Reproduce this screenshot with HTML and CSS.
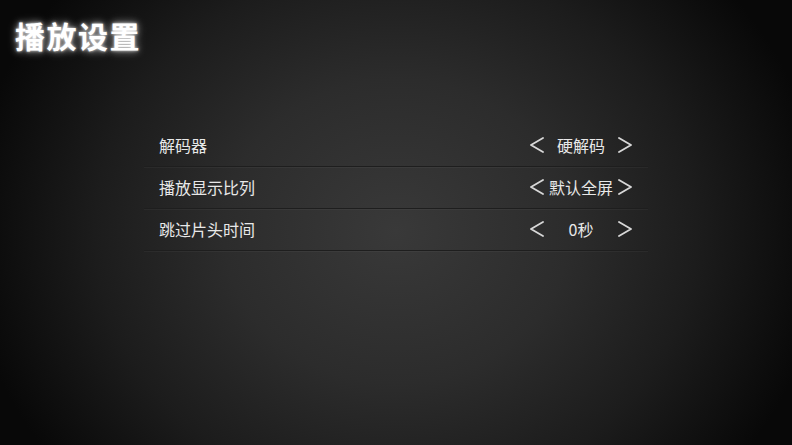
FILE: index.html
```html
<!DOCTYPE html>
<html lang="zh-CN">
<head>
<meta charset="utf-8">
<title>播放设置</title>
<link rel="stylesheet" href="styles.css">
</head>
<body>
<div class="screen">
  <h1 class="title">播放设置</h1>
  <ul class="settings">
    <li class="row">
      <span class="label">解码器</span>
      <span class="control">
        <svg class="chev" viewBox="0 0 14 16"><polyline points="13,1 1,8 13,15"/></svg>
        <span class="value">硬解码</span>
        <svg class="chev" viewBox="0 0 14 16"><polyline points="1,1 13,8 1,15"/></svg>
      </span>
    </li>
    <li class="row">
      <span class="label">播放显示比列</span>
      <span class="control">
        <svg class="chev" viewBox="0 0 14 16"><polyline points="13,1 1,8 13,15"/></svg>
        <span class="value">默认全屏</span>
        <svg class="chev" viewBox="0 0 14 16"><polyline points="1,1 13,8 1,15"/></svg>
      </span>
    </li>
    <li class="row">
      <span class="label">跳过片头时间</span>
      <span class="control">
        <svg class="chev" viewBox="0 0 14 16"><polyline points="13,1 1,8 13,15"/></svg>
        <span class="value">0秒</span>
        <svg class="chev" viewBox="0 0 14 16"><polyline points="1,1 13,8 1,15"/></svg>
      </span>
    </li>
  </ul>
</div>
</body>
</html>
```
FILE: styles.css
```css
* { box-sizing: border-box; }
html, body {
  margin: 0;
  padding: 0;
  width: 792px;
  height: 445px;
  overflow: hidden;
}
body {
  font-family: "Noto Sans CJK SC", "Noto Sans", sans-serif;
  color: #e6e6e6;
  background: #000;
}
.screen {
  width: 792px;
  height: 445px;
  background: radial-gradient(ellipse 430px 380px at 50% 52%, #393939 0%, #2c2c2c 40%, #1c1c1c 70%, #080808 100%);
  padding: 19px 0 0 0;
  display: flex;
  flex-direction: column;
}
.title {
  margin: 0 0 0 15px;
  font-size: 30px;
  line-height: 32px;
  font-weight: 700;
  color: #ffffff;
  text-shadow: 0 0 3px rgba(255,255,255,0.8), 0 0 7px rgba(255,255,255,0.55), 0 0 12px rgba(255,255,255,0.3);
  letter-spacing: 1.5px;
}
.settings {
  list-style: none;
  margin: 74px 0 0 144px;
  padding: 0;
  width: 504px;
}
.row {
  height: 42px;
  display: flex;
  align-items: center;
  justify-content: space-between;
  padding: 0 16px 2px 15px;
  border-bottom: 1px solid #1e1e1e;
  box-shadow: 0 1px 0 rgba(255,255,255,0.04);
}
.label {
  font-size: 16px;
  line-height: 20px;
  color: #e8e8e8;
}
.control {
  display: flex;
  align-items: center;
  gap: 5px;
}
.value {
  width: 64px;
  text-align: center;
  font-size: 16px;
  line-height: 20px;
  color: #e8e8e8;
}
.chev {
  width: 14px;
  height: 16px;
  fill: none;
  stroke: #d8d8d8;
  stroke-width: 1.8;
  stroke-linecap: round;
  stroke-linejoin: round;
}
```
